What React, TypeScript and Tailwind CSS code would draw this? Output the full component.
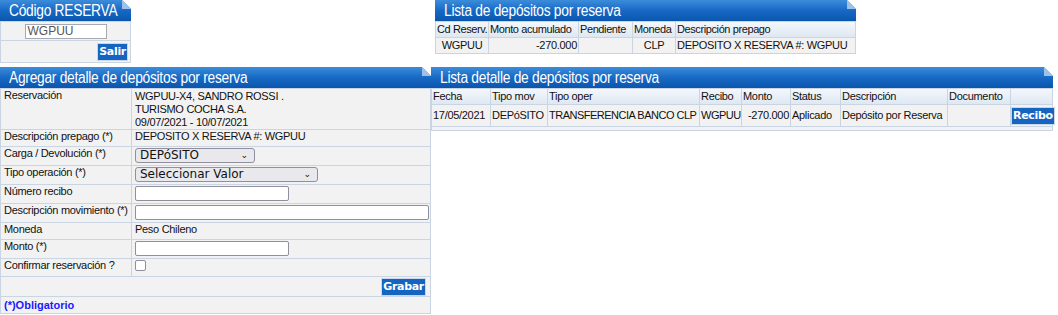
import React from "react";

const Header = ({ title }: { title: string }) => (
  <div className="relative h-[21px] bg-gradient-to-b from-[#3b8ddb] via-[#1769c4] to-[#0a56ae] pl-[9px] text-[16px] leading-[21px] text-white font-['Liberation_Sans',sans-serif] whitespace-nowrap overflow-hidden">
    <span className="inline-block origin-left scale-x-[0.86]">{title}</span>
    <div className="absolute right-0 top-0 w-0 h-0 border-l-[9px] border-l-transparent border-t-[9px] border-t-white" />
    <div className="absolute right-0 top-0 w-0 h-0 border-r-[9px] border-r-transparent border-b-[9px] border-b-[#9cc2ec]" />
  </div>
);

const Btn = ({ label }: { label: string }) => (
  <button className="bg-[#1565c0] text-white font-bold text-[11px] leading-[14px] px-[1px] py-[1px] border border-[#c8d7ea] font-['DejaVu_Sans',sans-serif] tracking-[-0.3px]">
    {label}
  </button>
);

const td = "border border-[#c9d5e3] px-[3px] align-top whitespace-nowrap overflow-hidden";

const Row = ({ label, children, h }: { label: string; children: React.ReactNode; h?: string }) => (
  <tr className={h}>
    <td className={td}>{label}</td>
    <td className={td}>{children}</td>
  </tr>
);

const inputCls = "h-[15px] bg-white border border-[#8f8f9d] rounded-[2px] mt-[1px] block";

const cell = "border border-[#c9d5e3] px-[1px] whitespace-nowrap overflow-hidden";

export default function App() {
  return (
    <div className="w-[1058px] h-[315px] bg-white text-[11px] leading-[13px] tracking-[-0.3px] text-[#111] font-['Liberation_Sans',sans-serif] overflow-hidden">
      <div className="flex h-[67px]">
        <div className="w-[131px]">
          <Header title="Código RESERVA" />
          <table className="w-full border-collapse bg-[#f2f2f2]">
            <tbody>
              <tr className="h-[19px]">
                <td className="border border-[#c9d5e3] text-center">
                  <div className="mx-auto w-[82px] h-[15px] border border-[#a8a8b0] bg-white text-left text-[12px] leading-[13px] text-[#555] pl-[2px] tracking-normal">WGPUU</div>
                </td>
              </tr>
              <tr className="h-[22px]">
                <td className="border border-[#c9d5e3] text-right pr-[2px]">
                  <Btn label="Salir" />
                </td>
              </tr>
            </tbody>
          </table>
        </div>
        <div className="ml-[304px] w-[421px]">
          <Header title="Lista de depósitos por reserva" />
          <table className="w-full table-fixed border-collapse bg-[#f2f2f2]">
            <colgroup>
              <col className="w-[53px]" />
              <col className="w-[90px]" />
              <col className="w-[54px]" />
              <col className="w-[43px]" />
              <col />
            </colgroup>
            <thead>
              <tr className="h-[16px] bg-gradient-to-b from-[#f4f7fb] to-[#dde7f2]">
                {["Cd Reserv.", "Monto acumulado", "Pendiente", "Moneda", "Descripción prepago"].map((h) => (
                  <th key={h} className={`${cell} font-normal text-left tracking-[-0.4px]`}>{h}</th>
                ))}
              </tr>
            </thead>
            <tbody>
              <tr className="h-[16px]">
                <td className={`${cell} text-center`}>WGPUU</td>
                <td className={`${cell} text-right`}>-270.000</td>
                <td className={cell}></td>
                <td className={`${cell} text-center`}>CLP</td>
                <td className={cell}>DEPOSITO X RESERVA #: WGPUU</td>
              </tr>
            </tbody>
          </table>
        </div>
      </div>

      <div className="flex">
        <div className="w-[431px]">
          <Header title="Agregar detalle de depósitos por reserva" />
          <table className="w-full table-fixed border-collapse bg-[#f2f2f2]">
            <colgroup>
              <col className="w-[131px]" />
              <col />
            </colgroup>
            <tbody>
              <Row label="Reservación" h="h-[40px]">
                <div className="pt-[1px]">WGPUU-X4, SANDRO ROSSI .<br />TURISMO COCHA S.A.<br />09/07/2021 - 10/07/2021</div>
              </Row>
              <Row label="Descripción prepago (*)" h="h-[17px]">DEPOSITO X RESERVA #: WGPUU</Row>
              <Row label="Carga / Devolución (*)" h="h-[19px]">
                <div className="mt-[1px] w-[120px] h-[15px] border border-[#8f8f9d] rounded-[3px] bg-[#e9e9ed] flex items-center justify-between pl-[4px] pr-[6px] font-['DejaVu_Sans',sans-serif] text-[12px] tracking-normal">
                  <span>DEPóSITO</span>
                  <span className="text-[9px]">&#8964;</span>
                </div>
              </Row>
              <Row label="Tipo operación (*)" h="h-[19px]">
                <div className="mt-[1px] w-[183px] h-[15px] border border-[#8f8f9d] rounded-[3px] bg-[#e9e9ed] flex items-center justify-between pl-[4px] pr-[6px] font-['DejaVu_Sans',sans-serif] text-[12px] tracking-normal">
                  <span>Seleccionar Valor</span>
                  <span className="text-[9px]">&#8964;</span>
                </div>
              </Row>
              <Row label="Número recibo" h="h-[19px]">
                <div className={`${inputCls} w-[154px]`} />
              </Row>
              <Row label="Descripción movimiento (*)" h="h-[19px]">
                <div className={`${inputCls} w-[294px]`} />
              </Row>
              <Row label="Moneda" h="h-[17px]">Peso Chileno</Row>
              <Row label="Monto (*)" h="h-[19px]">
                <div className={`${inputCls} w-[154px]`} />
              </Row>
              <Row label="Confirmar reservación ?" h="h-[18px]">
                <div className="mt-[1px] w-[11px] h-[11px] border border-[#8f8f9d] rounded-[2px] bg-white" />
              </Row>
              <tr className="h-[20px]">
                <td colSpan={2} className="border border-[#c9d5e3] text-right pr-[4px]">
                  <Btn label="Grabar" />
                </td>
              </tr>
              <tr className="h-[17px]">
                <td colSpan={2} className="border border-[#c9d5e3] px-[3px] font-bold text-[#1a1aff] tracking-normal">(*)Obligatorio</td>
              </tr>
            </tbody>
          </table>
        </div>

        <div className="w-[622px]">
          <Header title="Lista detalle de depósitos por reserva" />
          <table className="w-full table-fixed border-collapse bg-[#f2f2f2]">
            <colgroup>
              <col className="w-[59px]" />
              <col className="w-[57px]" />
              <col className="w-[152px]" />
              <col className="w-[42px]" />
              <col className="w-[49px]" />
              <col className="w-[50px]" />
              <col className="w-[107px]" />
              <col className="w-[63px]" />
              <col />
            </colgroup>
            <thead>
              <tr className="h-[16px] bg-gradient-to-b from-[#f4f7fb] to-[#dde7f2]">
                {["Fecha", "Tipo mov", "Tipo oper", "Recibo", "Monto", "Status", "Descripción", "Documento", ""].map((h, i) => (
                  <th key={i} className={`${cell} font-normal text-left`}>{h}</th>
                ))}
              </tr>
            </thead>
            <tbody>
              <tr className="h-[22px]">
                <td className={cell}>17/05/2021</td>
                <td className={cell}>DEPóSITO</td>
                <td className={`${cell} tracking-[-0.5px]`}>TRANSFERENCIA BANCO CLP</td>
                <td className={`${cell} tracking-[-0.5px]`}>WGPUU</td>
                <td className={`${cell} text-right`}>-270.000</td>
                <td className={cell}>Aplicado</td>
                <td className={cell}>Depósito por Reserva</td>
                <td className={cell}></td>
                <td className="border border-[#c9d5e3] text-right pr-[2px] align-bottom pb-[1px]">
                  <Btn label="Recibo" />
                </td>
              </tr>
              <tr className="h-[4px]">
                <td colSpan={9} className="border border-[#c9d5e3]"></td>
              </tr>
            </tbody>
          </table>
        </div>
      </div>
    </div>
  );
}
